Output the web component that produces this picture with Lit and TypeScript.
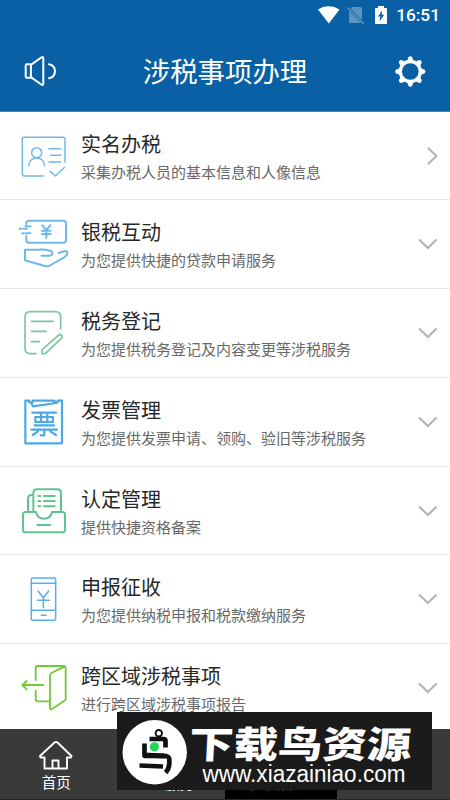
import { LitElement, html, svg, css } from "lit";
import { customElement } from "lit/decorators.js";

const art = {
  identity: { box: "54 42 162 180", color: "#72b8e6", width: 4.4, shape: svg`
    <path d="M195 150V81q0-5-5-5H72q-5 0-5 5V187q0 5 5 5H131"/>
    <circle cx="110" cy="122" r="15"/><path d="M86 162c0-32 48-32 48 0M147 110H182M152 130H182M147 150H182M150 178L166 192L194 166"/>` },
  bank: { box: "54 308 162 180", color: "#72b8e6", width: 6, shape: svg`
    <path d="M79 339V336q0-8 8-8H190q8 0 8 8V386q0 8-8 8H87q-8 0-8-8V373M76 345H91M59 352H64M70 352H81M67 366H72M78 366H91"/>
    <path d="M127 342L139 356L151 342M139 356V380M126 358H152M126 368H152"/>
    <path d="M125 433H150q7-1 7-8q0-5-7-7q-18-5-38-3H75V447L137 465H145L194 437q8-6 8-12q0-7-8-6L176 425"/>` },
  register: { box: "54 40 162 180", color: "#79c99d", width: 5, shape: svg`
    <path d="M182 117V82q0-16-16-16H91q-16 0-16 16V176q0 16 16 16H108M94 95H160M94 125H139M94 156H118"/>
    <path d="M126 192V180L175 137q5-5 10 0q4 5-1 9L136 192Z"/>` },
  invoice: { box: "54 306 162 180", color: "#4ba9e8", width: 6.5, shape: svg`
    <path d="M76 332H88V337H98V332H163V337H173V332H186V460H76Z"/><path d="M94 339L99 349L168 339L163 333"/>
    <path d="M97 368H168M106 381V396H159V381ZM123 368V396M142 368V396M104 406H162M94 419H171M133 419V436H122M114 424L98 435M151 424L168 435"/>` },
  approve: { box: "54 44 162 180", color: "#62c391", width: 6, shape: svg`
    <path d="M100 136V80q0-11 11-11H172q11 0 11 11V136M98 85q-14 0-14 12V136"/>
    <path d="M108 137H77q-8 0-8 8V190q0 8 8 8H187q8 0 8-8V145q0-8-8-8H156C150 164 114 164 108 137M112 176H151"/>
    <path d="M132 89H164M132 104H164M132 120H164M115 89H121M115 104H121M115 120H121"/>` },
  declare: { box: "54 310 162 180", color: "#58aeea", width: 4.6, shape: svg`
    <rect x="94" y="337" width="73" height="127" rx="4"/><path d="M94 353H167M94 434H167M124 449H138M114 376L130 396L146 376M130 396V426M112 404H148"/>` },
  region: { box: "54 55 162 180", color: "#70c936", width: 5.4, shape: svg`
    <path d="M107 121V86q0-7 7-7H190q7 0 7 7V177q0 4-5 7L156 208q-6 3-6-3V107q0-5 4-7L193 81M107 153V178q0 7 7 7H148M130 136H67M80 124L67 136L80 149"/>` },
};

const services = [
  { title: "实名办税", note: "采集办税人员的基本信息和人像信息", icon: art.identity, link: true },
  { title: "银税互动", note: "为您提供快捷的贷款申请服务", icon: art.bank },
  { title: "税务登记", note: "为您提供税务登记及内容变更等涉税服务", icon: art.register },
  { title: "发票管理", note: "为您提供发票申请、领购、验旧等涉税服务", icon: art.invoice },
  { title: "认定管理", note: "提供快捷资格备案", icon: art.approve },
  { title: "申报征收", note: "为您提供纳税申报和税款缴纳服务", icon: art.declare },
  { title: "跨区域涉税事项", note: "进行跨区域涉税事项报告", icon: art.region },
];

@customElement("app-root")
export class AppRoot extends LitElement {
  static styles = css`
    :host { display: block; position: relative; width: 450px; height: 800px; overflow: hidden; background: #fff; font-family: "Noto Sans CJK SC", sans-serif; }
    * { box-sizing: border-box; }
    svg { display: block; fill: none; stroke-linecap: round; stroke-linejoin: round; }
    .top { height: 111.5px; background: #0a60a4; color: #fff; border-bottom: 1px solid #3f82b6; }
    .status { height: 31px; display: flex; justify-content: flex-end; padding-right: 10px; }
    .clock { font: 500 17.3px/31px Roboto, sans-serif; width: 50px; text-align: right; }
    .bar { height: 80px; display: grid; grid-template-columns: 80px 1fr 80px; }
    h1 { margin: 0; text-align: center; font-weight: 400; font-size: 27.4px; line-height: 79px; }
    .row { height: 88.75px; display: grid; grid-template-columns: 63px 1fr 45px; padding-left: 18px; border-bottom: 1.5px solid #e8e8e8; }
    .icon { width: 54px; height: 60px; margin-top: 14px; }
    .title { font-size: 20px; line-height: 30px; margin-top: 17px; color: #282828; white-space: nowrap; }
    .note { font-size: 15px; line-height: 22px; margin-top: 2px; color: #686868; white-space: nowrap; }
    .arrow { width: 45px; height: 88px; stroke: #b4b4b4; stroke-width: 2.2; stroke-linecap: butt; stroke-linejoin: miter; }
    .nav { position: absolute; left: 0; right: 0; top: 728.5px; height: 71.5px; background: #3a3a3a; border-bottom: 1px solid #282326; color: #fff; display: grid; grid-template-columns: 112.5px 112.5px 112px 1fr; }
    .tab { text-align: center; font-size: 14.5px; line-height: 20px; overflow: hidden; }
    .tab svg { margin: 11px auto 1px; }
    .plain { padding-top: 45px; padding-left: 22px; line-height: 18px; }
    .active { background: #000; color: #278bd1; padding-top: 42.5px; font-size: 18px; }
    .mark { position: absolute; left: 117px; top: 712px; width: 315px; height: 78px; background: #1b1b1b; }
    .brand { font: 900 42px "Noto Sans CJK SC", sans-serif; }
    .site { font: 400 23px "Liberation Sans", sans-serif; }
  `;

  render() {
    return html`
      <header class="top">
        <div class="status">
          <svg width="76" height="31" viewBox="314 0 76 31">
            <path fill="#fff" d="M318 9.5C324 5 333 5 339.5 9.5L328.8 23.5Z"/>
            <path fill="#5b94c2" d="M352 7H360.5Q362 7 362 8.5V20L350.5 8.5ZM349 11L361 23H350.5Q349 23 349 21.5Z"/>
            <path stroke="#5b94c2" stroke-width="1.6" d="M347.8 8L363.2 23.4"/>
            <path fill="#fff" d="M378 6H384V8H386Q387 8 387 9V23Q387 24 386 24H376Q375 24 375 23V9Q375 8 376 8H378Z"/>
            <path fill="#0a60a4" d="M382.3 10.2L378 16.6H380.3L379.5 21.5L384.2 14.8H381.7Z"/>
          </svg>
          <span class="clock">16:51</span>
        </div>
        <div class="bar">
          <svg width="80" height="80" viewBox="0 31 80 80" stroke="#fff" stroke-width="2">
            <rect x="25.7" y="64.3" width="5.2" height="13.4" rx="1"/>
            <path d="M31.2 64.6L41.3 57.5Q43.3 56.3 43.3 58.5V83.5Q43.3 85.7 41.3 84.5L31.2 77.4"/>
            <path d="M49 64.2C57 66 57 76.5 49 78.3"/>
          </svg>
          <h1>涉税事项办理</h1>
          <svg width="80" height="80" viewBox="370 31 80 80">
            <circle cx="410.3" cy="71.5" r="10" stroke="#fff" stroke-width="3.3"/>
            ${[0, 45, 90, 135, 180, 225, 270, 315].map((a) => svg`<path fill="#fff" transform="rotate(${a} 410.3 71.5)" d="M407 61.5L408.4 57.2Q410.3 55.4 412.2 57.2L413.6 61.5Z"/>`)}
          </svg>
        </div>
      </header>
      <main>
        ${services.map((s) => html`
          <section class="row">
            <svg class="icon" viewBox=${s.icon.box} stroke=${s.icon.color} stroke-width=${s.icon.width}>${s.icon.shape}</svg>
            <div><div class="title">${s.title}</div><div class="note">${s.note}</div></div>
            <svg class="arrow" viewBox="0 0 45 88"><path d=${s.link ? "M23 36L31.5 44L23 52" : "M14 39.5L22.8 48L31.6 39.5"}/></svg>
          </section>`)}
      </main>
      <nav class="nav">
        <div class="tab">
          <svg width="36" height="31" viewBox="0 0 36 31" stroke="#fff" stroke-width="1.9"><path d="M6.5 17.5H2.5L2 16L16.5 2.5Q18 1.3 19.5 2.5L33.5 16L33 17.5H29V28.5H6.5ZM14.5 28V20.5H20.5V28"/></svg>
          首页
        </div>
        <div class="tab plain">服务</div>
        <div class="tab active">涉税办理</div>
        <div class="tab"></div>
      </nav>
      <aside class="mark">
        <svg width="315" height="78" viewBox="117 712 315 78">
          <circle cx="154.7" cy="752.2" r="32.2" fill="#fff"/>
          <g stroke="#111" stroke-width="4.7" stroke-linecap="butt" stroke-linejoin="round">
            <circle cx="158.8" cy="733.2" r="3.2" stroke-width="1.9"/>
            <path d="M149.5 739H163.5Q165.5 739 165.5 741V747.5M144.5 743.5V755.8H163Q170 755.8 169.3 760V764Q169 769 165.5 772.5M139.5 765.5L163 766.5"/>
            <path d="M144.5 755L164 756" stroke-width="5.2"/>
          </g>
          <circle cx="154.4" cy="746.8" r="4.6" fill="#20d75b"/>
          <text class="brand" fill="#fff" transform="translate(188.5 758) skewX(-3) scale(1.058 .88)">下载鸟资源</text>
          <text class="site" x="202.5" y="782" fill="#fff" textLength="203" lengthAdjust="spacingAndGlyphs">www.xiazainiao.com</text>
        </svg>
      </aside>`;
  }
}
